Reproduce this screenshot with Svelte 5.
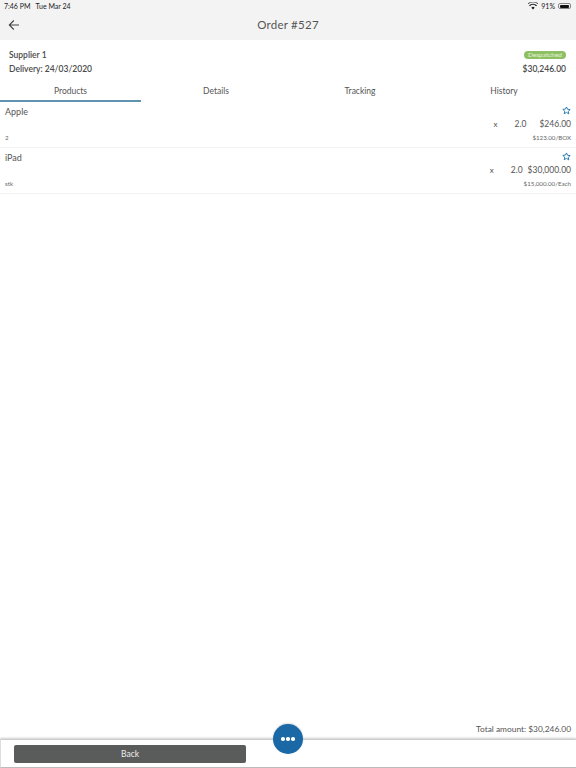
<script lang="ts">
  const tabs = ['Products', 'Details', 'Tracking', 'History'];
  const items = [
    { name: 'Apple', unit: '2', qty: '2.0', total: '$246.00', price: '$123.00/BOX' },
    { name: 'iPad', unit: 'stk', qty: '2.0', total: '$30,000.00', price: '$15,000.00/Each' },
  ];
</script>

<div class="page">
  <header class="top">
    <div class="status">
      <span class="clock">7:46 PM&nbsp;&nbsp; Tue Mar 24</span>
      <span class="sys">
        <svg width="10" height="8" viewBox="0 0 20 15"><path d="M10 14.5 6.6 10.8a5 5 0 0 1 6.8 0zM3.9 8 1.9 5.9a12 12 0 0 1 16.2 0L16.100 8a9 9 0 0 0-12.200 0z" fill="#222"/><path d="M0 3.600a15 15 0 0 1 20 0" fill="none" stroke="#222" stroke-width="1.600" transform="translate(0 -.6)"/></svg>
        <span>91%</span>
        <span class="battery"><i></i></span>
      </span>
    </div>
    <div class="nav">
      <svg class="back" width="12" height="12" viewBox="0 0 12 12" fill="none" stroke="#444" stroke-width="1.100"><path d="M11 6H1.500M5.800 1.500 1.300 6l4.500 4.500"/></svg>
      <h1>Order #527</h1>
    </div>
  </header>

  <section class="info">
    <div class="info-left">
      <div>Supplier 1</div>
      <div>Delivery: 24/03/2020</div>
    </div>
    <div class="info-right">
      <span class="badge">Despatched</span>
      <div>$30,246.00</div>
    </div>
  </section>

  <nav class="tabs">
    {#each tabs as tab, i}
      <div class="tab" class:active={i === 0}>{tab}</div>
    {/each}
  </nav>

  {#each items as item, i}
    <div class="item">
      <div class="row-top">
        <span class="name">{item.name}</span>
        <svg class="star" width="9" height="9" viewBox="0 0 24 24" fill="none" stroke="#2a79ad" stroke-width="2.600" stroke-linejoin="round"><path d="M12 2.500l2.900 6.300 6.900.8-5.100 4.700 1.400 6.800L12 17.100l-6.100 3.400 1.400-6.800-5.100-4.700 6.900-.8z"/></svg>
      </div>
      <div class="row-mid">
        <span class="x">x</span>
        <span class="qty">{item.qty}</span>
        <span class="total" class:tight={i === 1}>{item.total}</span>
      </div>
      <div class="row-bottom">
        <span>{item.unit}</span>
        <span>{item.price}</span>
      </div>
    </div>
  {/each}

  <div class="spacer"></div>

  <div class="amount">Total amount: $30,246.00</div>
  <footer class="bottom">
    <button class="back-btn">Back</button>
    <button class="fab" aria-label="More"><i></i><i></i><i></i></button>
  </footer>
</div>

<style>
  :global(body) {
    margin: 0;
    background: #fff;
  }

  .page {
    width: 576px;
    height: 768px;
    display: flex;
    flex-direction: column;
    overflow: hidden;
    font-family: Lato, "Liberation Sans", sans-serif;
    color: #555;
  }

  .top {
    height: 40px;
    background: #f3f3f3;
    flex: none;
  }

  .status {
    height: 12px;
    padding: 0 5px 0 4px;
    display: flex;
    justify-content: space-between;
    align-items: center;
    font-size: 7px;
    color: #222;
  }

  .sys {
    display: flex;
    align-items: center;
    gap: 3px;
  }

  .battery {
    width: 13px;
    height: 6px;
    border: 0.5px solid #888;
    border-radius: 2px;
    box-sizing: border-box;
    display: block;
    padding: 0.5px;
  }

  .battery i {
    display: block;
    width: 90%;
    height: 100%;
    background: #111;
    border-radius: 1px;
  }

  .nav {
    position: relative;
    height: 26px;
    display: flex;
    align-items: center;
    justify-content: center;
  }

  .back {
    position: absolute;
    left: 8px;
    top: 7px;
  }

  h1 {
    margin: -2px 0 0;
    font-size: 11.500px;
    font-weight: 400;
    letter-spacing: 0.25px;
    color: #555;
  }

  .info {
    height: 44px;
    box-sizing: border-box;
    padding: 8px 10px 0 9px;
    display: flex;
    justify-content: space-between;
    font-size: 8.500px;
    font-weight: 600;
    line-height: 14px;
    color: #4a4a4a;
    flex: none;
  }

  .info-right {
    display: flex;
    flex-direction: column;
    align-items: flex-end;
  }

  .badge {
    height: 8px;
    margin-top: 3px;
    margin-bottom: 3px;
    padding: 0 4px;
    line-height: 8px;
    font-size: 6.500px;
    font-weight: 400;
    color: #e4f2d8;
    background: #8cc063;
    border-radius: 4px;
  }

  .tabs {
    display: grid;
    grid-template-columns: repeat(4, 1fr);
    height: 18px;
    flex: none;
  }

  .tab {
    font-size: 8.500px;
    line-height: 15px;
    text-align: center;
    color: #555;
  }

  .tab.active {
    height: 16px;
    border-bottom: 2px solid #5f93b0;
    margin-right: 3px;
  }

  .item {
    height: 46px;
    box-sizing: border-box;
    padding: 3px 5px 0;
    border-bottom: 1px solid #f2f2f2;
    flex: none;
  }

  .row-top {
    display: flex;
    justify-content: space-between;
    align-items: center;
    height: 12px;
  }

  .name {
    font-size: 9px;
    color: #555;
  }

  .star {
    margin-top: -2px;
  }

  .row-mid {
    display: flex;
    justify-content: flex-end;
    align-items: center;
    height: 14px;
    font-size: 8.500px;
    color: #555;
  }

  .x {
    font-size: 8px;
    margin-right: 17px;
  }

  .total {
    margin-left: 13px;
  }

  .total.tight {
    margin-left: 5px;
  }

  .row-bottom {
    display: flex;
    justify-content: space-between;
    align-items: center;
    height: 12px;
    font-size: 6.200px;
    color: #666;
  }

  .spacer {
    flex: 1;
  }

  .amount {
    height: 19px;
    padding-right: 5px;
    text-align: right;
    font-size: 8.400px;
    line-height: 18px;
    color: #555;
    flex: none;
  }

  .bottom {
    position: relative;
    height: 29px;
    box-sizing: border-box;
    padding: 5px 13px 0;
    border-top: 1px solid #ccc;
    border-bottom: 1px solid #bbb;
    border-left: 1px solid #ddd;
    box-shadow: 0 -1px 2px rgba(0, 0, 0, 0.2);
    flex: none;
  }

  .back-btn {
    display: block;
    width: 232px;
    height: 18px;
    padding: 0;
    border: none;
    border-radius: 2px;
    background: #5a5c5b;
    color: #eee;
    font: 400 8.500px Lato, "Liberation Sans", sans-serif;
  }

  .fab {
    position: absolute;
    left: 272px;
    top: -16px;
    width: 30px;
    height: 30px;
    padding: 0;
    border: none;
    border-radius: 50%;
    background: #1a69a6;
    display: flex;
    align-items: center;
    justify-content: center;
    gap: 1.500px;
    box-shadow: 0 -1px 2px rgba(0, 0, 0, 0.15);
  }

  .fab i {
    width: 3.500px;
    height: 3.500px;
    border-radius: 50%;
    background: #fff;
  }
</style>
